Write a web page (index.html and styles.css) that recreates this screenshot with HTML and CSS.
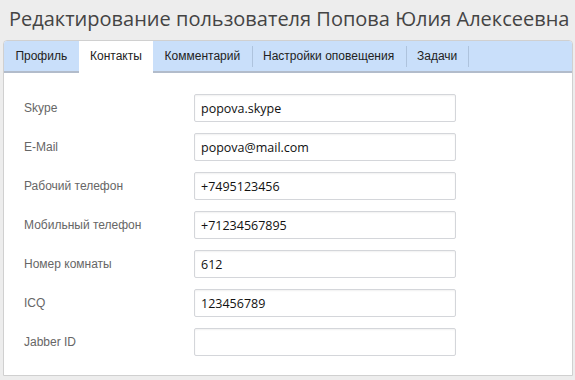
FILE: index.html
```html
<!DOCTYPE html>
<html lang="ru">
<head>
  <meta charset="UTF-8">
  <title>Редактирование пользователя</title>
  <link rel="stylesheet" href="styles.css">
</head>
<body>
  <h1 class="page-title">Редактирование пользователя Попова Юлия Алексеевна</h1>

  <div class="panel">
    <ul class="tabs">
      <li class="tab">Профиль</li>
      <li class="tab active">Контакты</li>
      <li class="tab">Комментарий</li>
      <li class="tab">Настройки оповещения</li>
      <li class="tab">Задачи</li>
    </ul>

    <form class="form">
      <div class="row">
        <label class="label">Skype</label>
        <input class="field" type="text" value="popova.skype">
      </div>
      <div class="row">
        <label class="label">E-Mail</label>
        <input class="field" type="text" value="popova@mail.com">
      </div>
      <div class="row">
        <label class="label">Рабочий телефон</label>
        <input class="field" type="text" value="+7495123456">
      </div>
      <div class="row">
        <label class="label">Мобильный телефон</label>
        <input class="field" type="text" value="+71234567895">
      </div>
      <div class="row">
        <label class="label">Номер комнаты</label>
        <input class="field" type="text" value="612">
      </div>
      <div class="row">
        <label class="label">ICQ</label>
        <input class="field" type="text" value="123456789">
      </div>
      <div class="row">
        <label class="label">Jabber ID</label>
        <input class="field" type="text" value="">
      </div>
    </form>
  </div>
</body>
</html>
```

FILE: styles.css
```css
* {
  margin: 0;
  padding: 0;
  box-sizing: border-box;
}

body {
  background: #ededed;
  font-family: 'Liberation Sans', Arial, sans-serif;
  padding: 0 2px 0 3px;
}

.page-title {
  font-family: 'Open Sans', sans-serif;
  font-size: 20px;
  font-weight: 400;
  color: #444;
  height: 40px;
  line-height: 38px;
  padding-left: 6px;
  white-space: nowrap;
}

.panel {
  background: #fff;
  border: 1px solid #d0d0d0;
  border-radius: 4px 4px 0 0;
}

.tabs {
  list-style: none;
  display: flex;
  background: #c9dffa;
  border-bottom: 2px solid #b2bccb;
  border-radius: 3px 3px 0 0;
  height: 32px;
}

.tab {
  font-size: 12px;
  color: #222;
  padding: 0 11.4px;
  line-height: 30px;
  position: relative;
}

.tab + .tab::before {
  content: "";
  position: absolute;
  left: 0;
  top: 5px;
  height: 21px;
  border-left: 1px solid #aec3dd;
}

.tab:last-child::after {
  content: "";
  position: absolute;
  right: 0;
  top: 5px;
  height: 21px;
  border-left: 1px solid #aec3dd;
}

.tab.active {
  background: #fff;
  height: 32px;
}

.tab.active::before,
.tab.active + .tab::before {
  display: none;
}

.form {
  padding: 21px 20px 19px 20px;
}

.row {
  display: flex;
  align-items: flex-start;
  margin-bottom: 11px;
}

.row:last-child {
  margin-bottom: 0;
}

.label {
  width: 170px;
  font-size: 12px;
  color: #666;
  padding-top: 7px;
}

.field {
  width: 262px;
  height: 28px;
  border: 1px solid #d4d6da;
  border-radius: 2px;
  box-shadow: inset 0 1px 2px rgba(0, 0, 0, 0.06);
  padding: 0 6px;
  font-family: 'Open Sans', sans-serif;
  font-size: 12.5px;
  color: #111;
  background: #fff;
}
```
